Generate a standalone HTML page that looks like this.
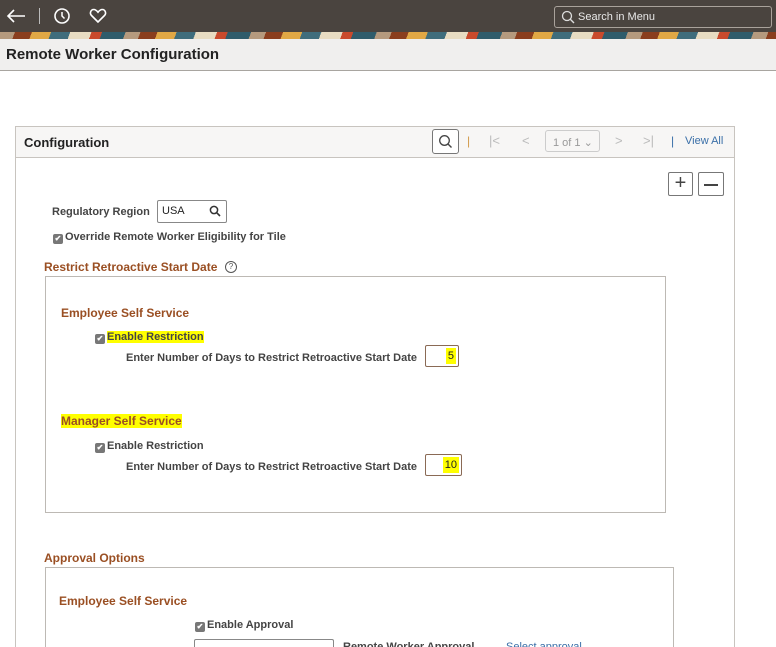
<!DOCTYPE html>
<html><head><meta charset="utf-8"><style>
*{box-sizing:border-box;margin:0;padding:0}
html,body{width:776px;height:647px;overflow:hidden}
body{background:#fff;font-family:"Liberation Sans",Arial,sans-serif;font-size:12px;color:#333;position:relative}
.a{position:absolute}
.top{left:0;top:0;width:776px;height:32px;background:#4a443f}
.banner{left:0;top:32px;width:776px;height:7px;background:repeating-linear-gradient(110deg,#b59a7e 0 14px,#8a3e1e 14px 30px,#e1a845 30px 48px,#3f6d7c 48px 66px,#e8dcc2 66px 86px,#c94a2c 86px 96px,#2f5c6b 96px 118px)}
.title{left:0;top:39px;width:776px;height:32px;background:#f0efee;border-bottom:1px solid #a8a5a0}
.title span{position:absolute;left:6px;top:7px;font-size:15px;font-weight:bold;color:#222}
.box{left:15px;top:126px;width:720px;height:521px;border:1px solid #c8c4bf;border-bottom:none}
.hdr{left:16px;top:127px;width:718px;height:31px;background:#f7f6f5;border-bottom:1px solid #c8c4bf}
.brown{color:#9a4f23;font-weight:bold}
.inner{border:1px solid #bdb9b4}
.cb{display:inline-block;width:10px;height:10px;background:#777;border-radius:2px;color:#fff;font-size:8px;line-height:10px;text-align:center;vertical-align:-1px;margin-right:2px}
.lbl{font-weight:bold;color:#444;font-size:11px}
.inp{border:1px solid #8a6a55;border-radius:2px;height:22px;background:#fff}
.hl{background:#ffff00}
</style></head><body>
<div class="a top"></div>
<svg class="a" style="left:5px;top:7px" width="22" height="18" viewBox="0 0 22 18"><path d="M20 9H3M9 3L3 9l6 6" stroke="#fff" stroke-width="1.6" fill="none"/></svg>
<div class="a" style="left:39px;top:8px;width:1px;height:16px;background:#bbb"></div>
<svg class="a" style="left:53px;top:7px" width="18" height="18" viewBox="0 0 18 18"><circle cx="9" cy="9" r="7" stroke="#fff" stroke-width="1.6" fill="none"/><path d="M9 5v4l2.5 2.5" stroke="#fff" stroke-width="1.5" fill="none"/></svg>
<svg class="a" style="left:89px;top:7px" width="18" height="17" viewBox="0 0 18 17"><path d="M9 15L2.5 8.5C0.5 6.5 1.5 2.5 4.8 2.5 6.8 2.5 8 4 9 5.2 10 4 11.2 2.5 13.2 2.5 16.5 2.5 17.5 6.5 15.5 8.5Z" stroke="#fff" stroke-width="1.6" fill="none"/></svg>
<div class="a" style="left:554px;top:6px;width:218px;height:22px;border:1px solid #a9a29b;border-radius:3px;background:#4a443f"></div>
<svg class="a" style="left:561px;top:10px" width="14" height="14" viewBox="0 0 14 14"><circle cx="6" cy="6" r="4.5" stroke="#ddd" stroke-width="1.3" fill="none"/><path d="M9.3 9.3L13 13" stroke="#ddd" stroke-width="1.4"/></svg>
<div class="a" style="left:578px;top:11px;color:#e8e8e8;font-size:11px">Search in Menu</div>
<div class="a banner"></div>
<div class="a title"><span>Remote Worker Configuration</span></div>

<div class="a box"></div>
<div class="a hdr"></div>
<div class="a" style="left:24px;top:135px;font-size:13px;font-weight:bold;color:#222">Configuration</div>
<div class="a" style="left:432px;top:129px;width:27px;height:25px;border:1px solid #777;border-radius:3px;background:#fff"></div>
<svg class="a" style="left:438px;top:134px" width="15" height="15" viewBox="0 0 15 15"><circle cx="6.5" cy="6.5" r="4.8" stroke="#444" stroke-width="1.3" fill="none"/><path d="M10 10l3.5 3.5" stroke="#444" stroke-width="1.4"/></svg>
<div class="a" style="left:467px;top:134px;color:#d19a4a">|</div>
<div class="a" style="left:489px;top:133px;color:#bbb;font-size:13px">|&lt;</div>
<div class="a" style="left:522px;top:133px;color:#bbb;font-size:13px">&lt;</div>
<div class="a" style="left:545px;top:130px;width:55px;height:22px;border:1px solid #ccc;border-radius:3px;color:#999;font-size:11px;padding:5px 0 0 7px">1 of 1 &#8964;</div>
<div class="a" style="left:615px;top:133px;color:#bbb;font-size:13px">&gt;</div>
<div class="a" style="left:643px;top:133px;color:#bbb;font-size:13px">&gt;|</div>
<div class="a" style="left:671px;top:134px;color:#3a6fa8">|</div>
<div class="a" style="left:685px;top:135px;color:#3a6fa8;font-size:11px">View All</div>
<div class="a" style="left:668px;top:172px;width:25px;height:24px;border:1px solid #777;border-radius:2px;font-size:20px;line-height:21px;text-align:center;color:#444">+</div>
<div class="a" style="left:698px;top:172px;width:26px;height:24px;border:1px solid #777;border-radius:2px"><div style="margin:11px 5px 0;height:2px;background:#444"></div></div>

<div class="a lbl" style="left:52px;top:206px">Regulatory Region</div>
<div class="a" style="left:157px;top:200px;width:70px;height:23px;border:1px solid #888;border-radius:2px;padding:4px 0 0 4px;font-size:11px;color:#222">USA</div>
<svg class="a" style="left:209px;top:205px" width="12" height="12" viewBox="0 0 12 12"><circle cx="5" cy="5" r="3.6" stroke="#333" stroke-width="1.5" fill="none"/><path d="M7.7 7.7L11 11" stroke="#333" stroke-width="1.6"/></svg>
<div class="a lbl" style="left:53px;top:231px"><span class="cb">✔</span>Override Remote Worker Eligibility for Tile</div>
<div class="a brown" style="left:44px;top:260px;font-size:12px">Restrict Retroactive Start Date</div>
<div class="a" style="left:225px;top:261px;width:12px;height:12px;border:1px solid #555;border-radius:50%;font-size:8px;line-height:10px;text-align:center;color:#555">?</div>

<div class="a inner" style="left:45px;top:276px;width:621px;height:237px"></div>
<div class="a brown" style="left:61px;top:306px;font-size:12px">Employee Self Service</div>
<div class="a lbl" style="left:95px;top:331px"><span class="cb">✔</span><span class="hl">Enable Restriction</span></div>
<div class="a lbl" style="left:126px;top:352px">Enter Number of Days to Restrict Retroactive Start Date</div>
<div class="a inp" style="left:425px;top:345px;width:34px"><span class="hl" style="position:absolute;right:2px;top:2px;padding:2px 2px;font-size:11px;color:#222">5</span></div>
<div class="a brown" style="left:61px;top:414px;font-size:12px"><span class="hl">Manager Self Service</span></div>
<div class="a lbl" style="left:95px;top:440px"><span class="cb">✔</span>Enable Restriction</div>
<div class="a lbl" style="left:126px;top:461px">Enter Number of Days to Restrict Retroactive Start Date</div>
<div class="a inp" style="left:425px;top:454px;width:37px"><span class="hl" style="position:absolute;right:2px;top:2px;padding:2px 2px;font-size:11px;color:#222">10</span></div>

<div class="a brown" style="left:44px;top:551px;font-size:12px">Approval Options</div>
<div class="a inner" style="left:45px;top:567px;width:629px;height:80px;border-bottom:none"></div>
<div class="a brown" style="left:59px;top:594px;font-size:12px">Employee Self Service</div>
<div class="a lbl" style="left:195px;top:619px"><span class="cb">✔</span>Enable Approval</div>
<div class="a" style="left:194px;top:639px;width:140px;height:8px;border:1px solid #888;border-bottom:none;border-radius:2px 2px 0 0"></div>
<div class="a" style="left:343px;top:641px;width:300px;height:6px;overflow:hidden"><span class="lbl" style="position:absolute;left:0;top:0;white-space:nowrap">Remote Worker Approval</span><span style="position:absolute;left:163px;top:0;color:#3a6fa8;font-size:11px;white-space:nowrap">Select approval</span></div>
</body></html>
